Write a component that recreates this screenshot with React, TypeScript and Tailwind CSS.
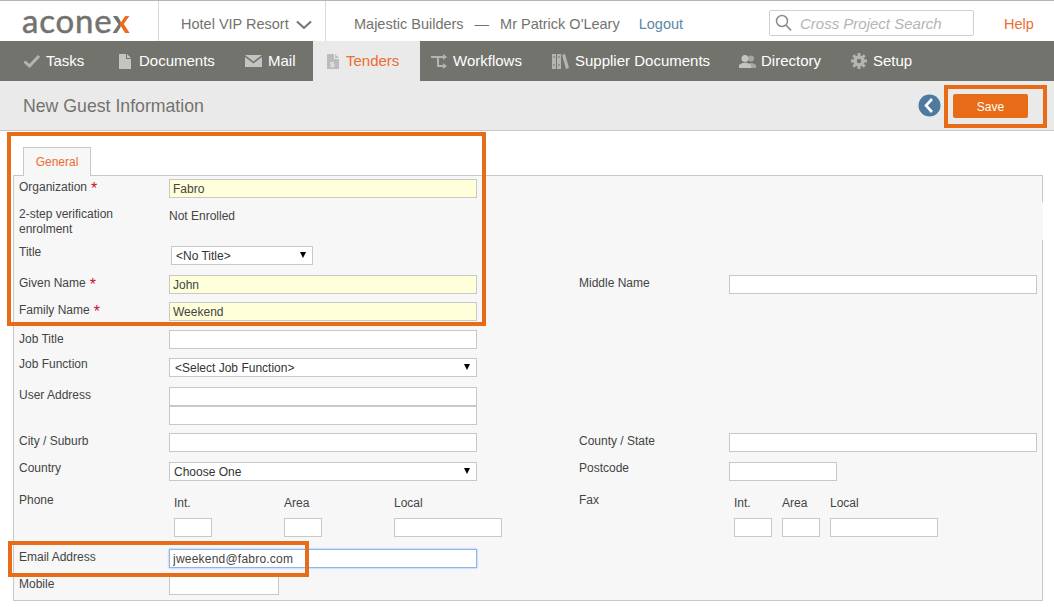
import type { ReactNode } from "react";

const OrangeBox = ({ className }: { className: string }) => (
  <div className={`absolute border-[4px] border-[#e86c17] pointer-events-none ${className}`} />
);

const Check = () => (
  <svg width="18" height="14" viewBox="0 0 18 14" fill="none">
    <path d="M1.5 7.5 L6.5 12 L16 2" stroke="#b5b5b0" strokeWidth="3" />
  </svg>
);
const Doc = () => (
  <svg width="12" height="15" viewBox="0 0 12 15">
    <path d="M0 0 H7 V5 H12 V15 H0 Z M8 0 L12 4 H8 Z" fill="#c4c4c0" />
  </svg>
);
const Envelope = () => (
  <svg width="17" height="12" viewBox="0 0 17 12">
    <path d="M0 0 H17 L8.5 6.5 Z M0 2 L8.5 8.5 L17 2 V12 H0 Z" fill="#c4c4c0" />
  </svg>
);
const TenderDoc = () => (
  <svg width="12" height="15" viewBox="0 0 12 15">
    <path d="M0 0 H7 V5 H12 V15 H0 Z M8 0 L12 4 H8 Z" fill="#bcbcbc" />
    <text x="3" y="13" fontSize="8" fontWeight="700" fill="#eaeaea" fontFamily="'Liberation Sans', sans-serif">$</text>
  </svg>
);
const Flow = () => (
  <svg width="17" height="15" viewBox="0 0 17 15" fill="none" stroke="#b5b5b0" strokeWidth="2">
    <path d="M0 3 H13" />
    <path d="M7 3 V12 H13" />
    <path d="M12 0 L16 3 L12 6 Z" fill="#b5b5b0" stroke="none" />
    <path d="M12 9 L16 12 L12 15 Z" fill="#b5b5b0" stroke="none" />
  </svg>
);
const Books = () => (
  <svg width="17" height="15" viewBox="0 0 17 15">
    <path d="M0 0 H4 V15 H0 Z M5 0 H9 V15 H5 Z M10 1 L13 0 L17 14 L14 15 Z" fill="#b5b5b0" />
    <path d="M1 3 H3 M6 3 H8 M1 11 H3 M6 11 H8" stroke="#73736e" strokeWidth="1" />
  </svg>
);
const People = () => (
  <svg width="17" height="13" viewBox="0 0 17 13">
    <circle cx="12" cy="3.5" r="3" fill="#a8a8a3" />
    <path d="M8 13 V10 Q12 6 17 10 V13 Z" fill="#a8a8a3" />
    <circle cx="6" cy="3.5" r="3.5" fill="#c4c4c0" />
    <path d="M0 13 V10 Q6 5 12 10 V13 Z" fill="#c4c4c0" />
  </svg>
);
const Gear = () => (
  <svg width="16" height="16" viewBox="0 0 16 16" fill="none">
    <circle cx="8" cy="8" r="4" stroke="#b5b5b0" strokeWidth="3.6" />
    <path d="M8 0 V3 M8 13 V16 M0 8 H3 M13 8 H16 M2.3 2.3 L4.4 4.4 M11.6 11.6 L13.7 13.7 M2.3 13.7 L4.4 11.6 M11.6 4.4 L13.7 2.3" stroke="#b5b5b0" strokeWidth="2.8" />
  </svg>
);

const NavItem = ({ icon, label, active, className }: { icon: ReactNode; label: string; active?: boolean; className: string }) => (
  <div className={`flex h-full items-center ${active ? "bg-[#eaeaea] text-[#ee6c2f]" : "text-white"} ${className}`}>
    {icon}
    <span className="pt-[1px]">{label}</span>
  </div>
);

const Label = ({ children, req, className = "" }: { children: ReactNode; req?: boolean; className?: string }) => (
  <div className={`w-[150px] shrink-0 leading-[15px] ${req ? "-mt-px" : ""} ${className}`}>
    {children}
    {req && <span className="relative top-[3px] ml-[4px] text-[16px] leading-none text-[#c8102e]">*</span>}
  </div>
);

const Input = ({ value, className, yellow, focus }: { value?: string; className: string; yellow?: boolean; focus?: boolean }) => (
  <input
    readOnly
    value={value ?? ""}
    className={`h-[19px] shrink-0 border px-[3px] text-[12px] text-[#444] outline-none ${
      focus ? "border-[#8fb4ee] shadow-[0_0_2px_#8fb4ee]" : "border-[#c8c8c8]"
    } ${yellow ? "bg-[#ffffd9]" : "bg-white"} ${className}`}
  />
);

const FakeSelect = ({ value, className }: { value: string; className: string }) => (
  <div className={`flex h-[19px] items-center justify-between border border-[#c8c8c8] bg-white pr-[6px] text-[12px] text-[#333] ${className}`}>
    <span>{value}</span>
    <span className="mb-[2px] h-0 w-0 border-x-[3.5px] border-t-[6px] border-x-transparent border-t-black" />
  </div>
);

const PhoneFields = ({ colClass }: { colClass: string }) => (
  <div className="shrink-0 pl-[5px] pt-[2px]">
    <div className="flex leading-[15px]">
      <span className={colClass}>Int.</span>
      <span className={colClass}>Area</span>
      <span>Local</span>
    </div>
    <div className="mt-[7px] flex">
      <div className={`shrink-0 ${colClass}`}><Input className="w-[38px]" /></div>
      <div className={`shrink-0 ${colClass}`}><Input className="w-[38px]" /></div>
      <Input className="w-[108px]" />
    </div>
  </div>
);

export default function App() {
  return (
    <div className="relative h-[607px] w-[1054px] overflow-hidden bg-white font-['Liberation_Sans',Arial,sans-serif]">
      {/* Header */}
      <header className="flex h-[41px] items-stretch border-t border-[#b4b4b4] text-[14.5px] text-[#73736e]">
        <div className="flex w-[159px] items-center border-r border-[#d8d8d8] pb-[2px] pl-[22px]">
          <span className="font-['Lato',sans-serif] text-[33px] leading-none tracking-[0.8px] text-[#73736e] [-webkit-text-stroke:0.5px_#73736e]">
            acone
            <span className="bg-[linear-gradient(90deg,#73736e_42%,#ec6c1f_42%)] bg-clip-text font-bold text-transparent [-webkit-text-stroke:0]">x</span>
          </span>
        </div>
        <div className="flex w-[167px] items-center gap-[7px] border-r border-[#d8d8d8] pl-[22px] pt-[7px]">
          Hotel VIP Resort
          <svg width="16" height="10" viewBox="0 0 16 10" fill="none">
            <path d="M1 1.5 L8 8 L15 1.5" stroke="#73736e" strokeWidth="2" />
          </svg>
        </div>
        <div className="flex w-[443px] items-center pl-[28px] pt-[7px]">
          <span>Majestic Builders</span>
          <span className="mx-[11px]">—</span>
          <span>Mr Patrick O'Leary</span>
          <span className="ml-[19px] text-[#5d87a6]">Logout</span>
        </div>
        <div className="mt-[9px] flex h-[26px] w-[205px] items-center gap-[8px] rounded-[2px] border border-[#d0d0d0] pl-[5px] text-[15px] italic text-[#b4b4b4]">
          <svg width="17" height="18" viewBox="0 0 17 18" fill="none">
            <circle cx="7" cy="7" r="5.5" stroke="#8c8c8c" strokeWidth="1.5" />
            <path d="M11 11 L16 16.5" stroke="#8c8c8c" strokeWidth="1.8" />
          </svg>
          <span className="pt-[2px]">Cross Project Search</span>
        </div>
        <div className="ml-[30px] flex items-center pt-[7px] text-[#ee6c2f]">Help</div>
      </header>

      {/* Nav */}
      <nav className="flex h-[40px] items-center bg-[#73736e] text-[15px]">
        <NavItem icon={<Check />} label="Tasks" className="w-[119px] gap-[5px] pl-[23px]" />
        <NavItem icon={<Doc />} label="Documents" className="w-[126px] gap-[8px]" />
        <NavItem icon={<Envelope />} label="Mail" className="w-[68px] gap-[6px]" />
        <NavItem icon={<TenderDoc />} label="Tenders" active className="w-[107px] gap-[7px] pl-[14px]" />
        <NavItem icon={<Flow />} label="Workflows" className="w-[132px] gap-[5px] pl-[11px]" />
        <NavItem icon={<Books />} label="Supplier Documents" className="w-[187px] gap-[6px]" />
        <NavItem icon={<People />} label="Directory" className="w-[112px] gap-[5px]" />
        <NavItem icon={<Gear />} label="Setup" className="gap-[6px]" />
      </nav>

      {/* Title bar */}
      <div className="flex h-[50px] items-center justify-between border-b border-[#c8c8c8] bg-[#eaeaea] pl-[23px] pr-[26px]">
        <h1 className="pt-[2px] text-[17.7px] text-[#73736e]">New Guest Information</h1>
        <div className="flex items-center gap-[12px]">
          <svg width="23" height="23" viewBox="0 0 23 23">
            <circle cx="11.5" cy="11.5" r="11" fill="#4f7aa0" />
            <path d="M14 5 L8 11.5 L14 18" stroke="#fff" strokeWidth="2.6" fill="none" />
          </svg>
          <button className="h-[24px] w-[75px] rounded-[2px] bg-[#e86c17] pt-[2px] text-[12px] text-white">Save</button>
        </div>
      </div>

      {/* Tab */}
      <div className="relative z-10 ml-[23px] mt-[16px] flex h-[29px] w-[68px] items-center justify-center border border-b-0 border-[#c8c8c8] bg-[#f7f7f7] text-[12px] text-[#ee6c2f]">
        General
      </div>

      {/* Form panel */}
      <div className="-mt-px ml-[13px] h-[426px] w-[1030px] border border-[#c8c8c8] bg-[#f7f7f7] pl-[5px] pt-[3px] text-[12px] text-[#444]">
        <div className="flex h-[28px]"><Label req>Organization</Label><Input value="Fabro" yellow className="w-[308px]" /></div>
        <div className="flex h-[39px]"><Label>2-step verification<br />enrolment</Label><span className="pt-[2px] leading-[15px]">Not Enrolled</span></div>
        <div className="flex h-[29px]"><Label className="-mt-px">Title</Label><FakeSelect value="<No Title>" className="ml-[2px] w-[142px] pl-[4px]" /></div>
        <div className="flex h-[27px]">
          <Label req>Given Name</Label><Input value="John" yellow className="w-[308px]" />
          <Label className="ml-[102px] pt-px">Middle Name</Label><Input className="w-[308px]" />
        </div>
        <div className="flex h-[28px]"><Label req>Family Name</Label><Input value="Weekend" yellow className="w-[308px]" /></div>
        <div className="flex h-[28px]"><Label className="pt-[2px]">Job Title</Label><Input className="w-[308px]" /></div>
        <div className="flex h-[29px]"><Label className="-mt-px">Job Function</Label><FakeSelect value="<Select Job Function>" className="w-[308px] pl-[5px]" /></div>
        <div className="flex h-[46px]">
          <Label className="pt-px">User Address</Label>
          <div className="flex flex-col"><Input className="w-[308px]" /><Input className="w-[308px]" /></div>
        </div>
        <div className="flex h-[29px]">
          <Label className="pt-px">City / Suburb</Label><Input className="w-[308px]" />
          <Label className="ml-[102px] pt-px">County / State</Label><Input className="w-[308px]" />
        </div>
        <div className="flex h-[32px]">
          <Label className="-mt-px">Country</Label><FakeSelect value="Choose One" className="w-[308px] pl-[4px]" />
          <Label className="ml-[102px] -mt-px">Postcode</Label><Input className="w-[108px]" />
        </div>
        <div className="flex h-[55px]">
          <Label className="-mt-px">Phone</Label><PhoneFields colClass="w-[110px]" />
          <Label className="ml-[77px] -mt-px">Fax</Label><PhoneFields colClass="w-[48px]" />
        </div>
        <div className="flex h-[27px]"><Label className="pt-px">Email Address</Label><Input value="jweekend@fabro.com" focus className="w-[308px] tracking-[0.22px]" /></div>
        <div className="flex"><Label className="pt-px">Mobile</Label><Input className="w-[110px]" /></div>
      </div>

      {/* Gap in the panel's right border */}
      <div className="absolute left-[1042px] top-[202px] h-[38px] w-[1px] bg-[#f7f7f7]" />

      {/* Annotation boxes over the page */}
      <OrangeBox className="left-[944px] top-[85px] h-[43px] w-[103px]" />
      <OrangeBox className="left-[7px] top-[132px] h-[194px] w-[479px]" />
      <OrangeBox className="left-[8px] top-[541px] h-[36px] w-[301px]" />
    </div>
  );
}
